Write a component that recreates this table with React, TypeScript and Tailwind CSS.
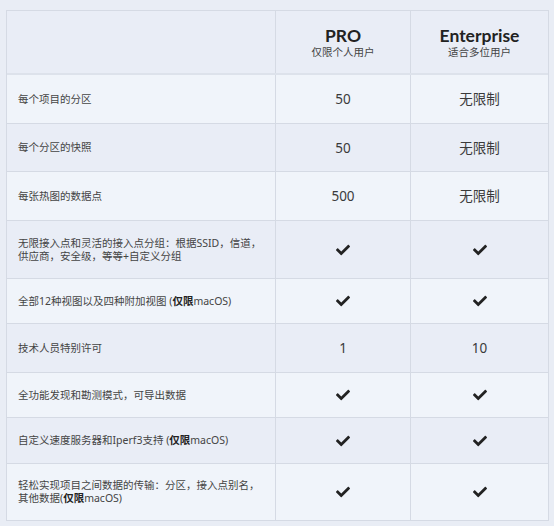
import React from "react";
import { FaCheck } from "react-icons/fa";

type Cell = string | "check";
type Row = { label: React.ReactNode; pro: Cell; ent: Cell; h: string; bg: string };

const light = "bg-[#f0f4fa]";
const dark = "bg-[#e9edf6]";

const Mac = () => (
  <>
    (<b className="font-bold text-[#222]">仅限</b>macOS)
  </>
);

const rows: Row[] = [
  { label: "每个项目的分区", pro: "50", ent: "无限制", h: "h-[49px]", bg: light },
  { label: "每个分区的快照", pro: "50", ent: "无限制", h: "h-[48px]", bg: dark },
  { label: "每张热图的数据点", pro: "500", ent: "无限制", h: "h-[49px]", bg: light },
  {
    label: (
      <>
        无限接入点和灵活的接入点分组：根据SSID，信道，
        <br />
        供应商，安全级，等等+自定义分组
      </>
    ),
    pro: "check",
    ent: "check",
    h: "h-[58px]",
    bg: dark,
  },
  {
    label: (
      <>
        全部12种视图以及四种附加视图 <Mac />
      </>
    ),
    pro: "check",
    ent: "check",
    h: "h-[45px]",
    bg: light,
  },
  { label: "技术人员特别许可", pro: "1", ent: "10", h: "h-[49px]", bg: dark },
  { label: "全功能发现和勘测模式，可导出数据", pro: "check", ent: "check", h: "h-[45px]", bg: light },
  {
    label: (
      <>
        自定义速度服务器和Iperf3支持 <Mac />
      </>
    ),
    pro: "check",
    ent: "check",
    h: "h-[46px]",
    bg: dark,
  },
  {
    label: (
      <>
        轻松实现项目之间数据的传输：分区，接入点别名，
        <br />
        其他数据<Mac />
      </>
    ),
    pro: "check",
    ent: "check",
    h: "h-[56px]",
    bg: light,
  },
];

function Value({ v }: { v: Cell }) {
  if (v === "check") return <FaCheck className="text-[#222] w-[14px] h-[14px]" />;
  return <span className="text-[13.5px] leading-[20px] text-[#3a3a3a]">{v}</span>;
}

export default function App() {
  return (
    <div
      className="w-[554px] h-[526px] bg-[#e9edf5] pt-[10px] pl-[6px]"
      style={{ fontFamily: '"Noto Sans", "Noto Sans CJK SC", sans-serif' }}
    >
      <div className="w-[543px] border border-[#d5dae4]">
        <div className="flex h-[64px] border-b-2 border-[#dde2eb] bg-[#e9edf6]">
          <div className="w-[269px] border-r border-[#d5dae4]" />
          <div className="w-[135px] border-r border-[#d5dae4] flex flex-col items-center justify-center">
            <div
              className="text-[17.5px] leading-[21px] font-bold text-[#222]"
              style={{ fontFamily: '"Lato", "Noto Sans", sans-serif' }}
            >
              PRO
            </div>
            <div className="text-[10.5px] leading-[13px] text-[#444]">仅限个人用户</div>
          </div>
          <div className="flex-1 flex flex-col items-center justify-center">
            <div
              className="text-[17.5px] leading-[21px] font-bold text-[#222]"
              style={{ fontFamily: '"Lato", "Noto Sans", sans-serif' }}
            >
              Enterprise
            </div>
            <div className="text-[10.5px] leading-[13px] text-[#444]">适合多位用户</div>
          </div>
        </div>
        {rows.map((r, i) => (
          <div
            key={i}
            className={`flex ${r.h} ${r.bg} ${i < rows.length - 1 ? "border-b border-[#d5dae4]" : ""}`}
          >
            <div className="w-[269px] border-r border-[#d5dae4] flex items-center px-[11px] text-[10.5px] leading-[12.6px] text-[#444]">
              <div>{r.label}</div>
            </div>
            <div className="w-[135px] border-r border-[#d5dae4] flex items-center justify-center">
              <Value v={r.pro} />
            </div>
            <div className="flex-1 flex items-center justify-center">
              <Value v={r.ent} />
            </div>
          </div>
        ))}
      </div>
    </div>
  );
}
